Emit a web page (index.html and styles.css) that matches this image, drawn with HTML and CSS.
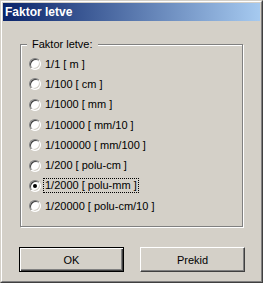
FILE: index.html
```html
<!DOCTYPE html>
<html lang="hr">
<head>
  <meta charset="UTF-8">
  <title>Faktor letve</title>
  <link rel="stylesheet" href="styles.css">
</head>
<body>
  <div class="dialog">
    <div class="frame">
      <div class="titlebar">Faktor letve</div>
      <div class="content">
        <fieldset class="group">
          <legend>Faktor letve:</legend>
          <label class="option"><span class="radio"></span><span class="text">1/1 [ m ]</span></label>
          <label class="option"><span class="radio"></span><span class="text">1/100 [ cm ]</span></label>
          <label class="option"><span class="radio"></span><span class="text">1/1000 [ mm ]</span></label>
          <label class="option"><span class="radio"></span><span class="text">1/10000 [ mm/10 ]</span></label>
          <label class="option"><span class="radio"></span><span class="text">1/100000 [ mm/100 ]</span></label>
          <label class="option"><span class="radio"></span><span class="text">1/200 [ polu-cm ]</span></label>
          <label class="option"><span class="radio checked"></span><span class="text focused">1/2000 [ polu-mm ]</span></label>
          <label class="option"><span class="radio"></span><span class="text">1/20000 [ polu-cm/10 ]</span></label>
        </fieldset>
        <div class="buttons">
          <button class="btn default">OK</button>
          <button class="btn">Prekid</button>
        </div>
      </div>
    </div>
  </div>
</body>
</html>
```

FILE: styles.css
```css
* {
  margin: 0;
  padding: 0;
  box-sizing: border-box;
}
body {
  font-family: 'Liberation Sans', Arial, sans-serif;
  font-size: 11px;
  color: #000;
  background: #d4d0c8;
}
.dialog {
  width: 263px;
  height: 283px;
  background: #d4d0c8;
  border: 1px solid;
  border-color: #d4d0c8 #404040 #404040 #d4d0c8;
}
.frame {
  height: 100%;
  border: 1px solid;
  border-color: #fff #808080 #808080 #fff;
  padding: 1px;
  display: flex;
  flex-direction: column;
}
.titlebar {
  height: 18px;
  padding-left: 2px;
  background: linear-gradient(to right, #0a246a, #a6caf0);
  color: #fff;
  font-weight: bold;
  font-size: 12px;
  line-height: 18px;
}
.content {
  padding: 17px 0 0 17px;
}
.group {
  width: 223px;
  border: 1px solid #808080;
  box-shadow: 1px 1px 0 #fff, inset 1px 1px 0 #fff;
  padding: 3px 6px 10px 6px;
  display: flex;
  flex-direction: column;
}
.group legend {
  padding: 0 5px;
  line-height: 13px;
  background: #d4d0c8;
}
.option {
  height: 20.3px;
  display: flex;
  align-items: center;
}
.radio {
  width: 12px;
  height: 12px;
  margin-left: 2px;
  border-radius: 50%;
  border: 1px solid;
  border-color: #808080 #fff #fff #808080;
  background: #fff;
  box-shadow: inset 1px 1px 0 #404040, inset -1px -1px 0 #d4d0c8;
  display: flex;
  align-items: center;
  justify-content: center;
}
.radio.checked::after {
  content: "";
  width: 4px;
  height: 4px;
  border-radius: 50%;
  background: #000;
}
.text {
  margin-left: 3px;
  padding: 0 1px;
  line-height: 13px;
}
.text.focused {
  outline: 1px dotted #000;
}
.buttons {
  margin-top: 20px;
  margin-left: -1px;
  display: flex;
  gap: 16px;
}
.btn {
  width: 105px;
  height: 25px;
  font-family: 'Liberation Sans', Arial, sans-serif;
  font-size: 11px;
  color: #000;
  background: #d4d0c8;
  border: 1px solid;
  border-color: #fff #404040 #404040 #fff;
  box-shadow: inset -1px -1px 0 #808080;
}
.btn.default {
  border: 1px solid #000;
  box-shadow: inset 1px 1px 0 #fff, inset -1px -1px 0 #404040, inset -2px -2px 0 #808080;
}
```
